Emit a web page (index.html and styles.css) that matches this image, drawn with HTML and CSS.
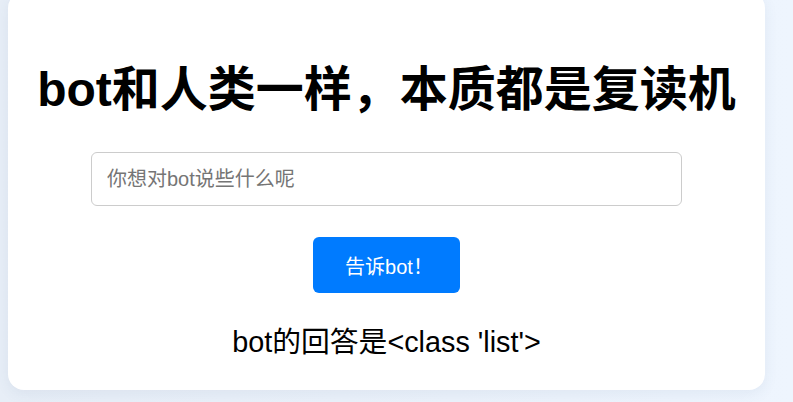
FILE: index.html
```html
<!DOCTYPE html>
<html lang="zh">
<head>
<meta charset="utf-8">
<title>bot</title>
<link rel="stylesheet" href="styles.css">
</head>
<body>
<main class="card">
  <h1 class="title">bot和人类一样，本质都是复读机</h1>
  <input class="ask" type="text" placeholder="你想对bot说些什么呢">
  <button class="send" type="button">告诉bot！</button>
  <p class="answer">bot的回答是&lt;class 'list'&gt;</p>
</main>
</body>
</html>
```

FILE: styles.css
```css
html, body {
  margin: 0;
  padding: 0;
}
body {
  width: 793px;
  height: 402px;
  overflow: hidden;
  background: linear-gradient(to right, #e7eef7, #eef5fe);
  font-family: "Liberation Sans", "Noto Sans CJK SC", sans-serif;
}
.card {
  box-sizing: border-box;
  width: 757px;
  margin: -8px 0 0 8px;
  padding: 69px 0 31px;
  background: #fff;
  border-radius: 16px;
  box-shadow: 0 4px 14px rgba(60, 90, 130, 0.08);
  display: flex;
  flex-direction: column;
  align-items: center;
}
.title {
  margin: 0;
  font-size: 48px;
  line-height: 58px;
  font-weight: bold;
  color: #000;
  white-space: nowrap;
}
.ask {
  box-sizing: border-box;
  margin-top: 33px;
  width: 591px;
  height: 54px;
  padding: 0 15px;
  border: 1px solid #ccc;
  border-radius: 6px;
  font-family: "Liberation Sans", "Noto Sans CJK SC", sans-serif;
  font-size: 20px;
  color: #333;
  outline: none;
}
.ask::placeholder {
  color: #757575;
}
.send {
  box-sizing: border-box;
  margin-top: 31px;
  width: 147px;
  height: 56px;
  padding: 0 0 0 5px;
  border: none;
  border-radius: 6px;
  background: #007bff;
  color: #fff;
  font-family: "Liberation Sans", "Noto Sans CJK SC", sans-serif;
  font-size: 20px;
}
.answer {
  margin: 32px 0 0;
  font-size: 28.8px;
  line-height: 34px;
  color: #000;
  white-space: nowrap;
}
```
